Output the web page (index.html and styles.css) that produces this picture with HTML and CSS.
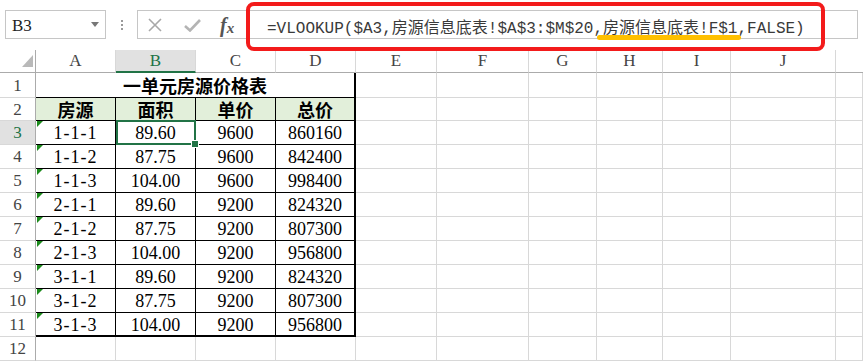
FILE: index.html
```html
<!DOCTYPE html>
<html lang="zh">
<head>
<meta charset="utf-8">
<link rel="stylesheet" href="styles.css">
</head>
<body>
<div class="bar">
  <div class="namebox"><span>B3</span><span class="caret"></span></div>
  <div class="grip"><i></i><i></i><i></i></div>
  <div class="fbar">
    <div class="fbtns">
      <svg class="ic-x" width="14" height="14" viewBox="0 0 14 14"><path d="M1 1L13 13M13 1L1 13" stroke="#a8a8a8" stroke-width="1.6" fill="none"/></svg>
      <svg class="ic-ok" width="17" height="13" viewBox="0 0 17 13"><path d="M1 7L6 11.5L16 1" stroke="#b4b4b4" stroke-width="2.6" fill="none"/></svg>
      <span class="fx"><i>f</i><i class="x">x</i></span>
    </div>
    <div class="ftext">=VLOOKUP($A3,房源信息底表!$A$3:$M$20,<span class="hl">房源信息底表!F$1</span>,FALSE)</div>
  </div>
  <div class="redbox"></div>
</div>

<div class="sheet">
  <div class="ch corner"></div>
  <div class="ch">A</div><div class="ch selh">B</div><div class="ch">C</div><div class="ch">D</div><div class="ch">E</div><div class="ch">F</div><div class="ch">G</div><div class="ch">H</div><div class="ch">I</div><div class="ch">J</div><div class="ch k"></div>

  <div class="rh">1</div><div class="c title">一单元房源价格表</div><div class="c"></div><div class="c"></div><div class="c"></div><div class="c"></div><div class="c"></div><div class="c"></div><div class="c k"></div>

  <div class="rh">2</div><div class="c t hd">房源</div><div class="c t hd">面积</div><div class="c t hd">单价</div><div class="c t hd d">总价</div><div class="c"></div><div class="c"></div><div class="c"></div><div class="c"></div><div class="c"></div><div class="c"></div><div class="c k"></div>

  <div class="rh rsel">3</div><div class="c t tri">1-1-1</div><div class="c t sel">89.60</div><div class="c t">9600</div><div class="c t d">860160</div><div class="c"></div><div class="c"></div><div class="c"></div><div class="c"></div><div class="c"></div><div class="c"></div><div class="c k"></div>

  <div class="rh">4</div><div class="c t tri">1-1-2</div><div class="c t">87.75</div><div class="c t">9600</div><div class="c t d">842400</div><div class="c"></div><div class="c"></div><div class="c"></div><div class="c"></div><div class="c"></div><div class="c"></div><div class="c k"></div>

  <div class="rh">5</div><div class="c t tri">1-1-3</div><div class="c t">104.00</div><div class="c t">9600</div><div class="c t d">998400</div><div class="c"></div><div class="c"></div><div class="c"></div><div class="c"></div><div class="c"></div><div class="c"></div><div class="c k"></div>

  <div class="rh">6</div><div class="c t tri">2-1-1</div><div class="c t">89.60</div><div class="c t">9200</div><div class="c t d">824320</div><div class="c"></div><div class="c"></div><div class="c"></div><div class="c"></div><div class="c"></div><div class="c"></div><div class="c k"></div>

  <div class="rh">7</div><div class="c t tri">2-1-2</div><div class="c t">87.75</div><div class="c t">9200</div><div class="c t d">807300</div><div class="c"></div><div class="c"></div><div class="c"></div><div class="c"></div><div class="c"></div><div class="c"></div><div class="c k"></div>

  <div class="rh">8</div><div class="c t tri">2-1-3</div><div class="c t">104.00</div><div class="c t">9200</div><div class="c t d">956800</div><div class="c"></div><div class="c"></div><div class="c"></div><div class="c"></div><div class="c"></div><div class="c"></div><div class="c k"></div>

  <div class="rh">9</div><div class="c t tri">3-1-1</div><div class="c t">89.60</div><div class="c t">9200</div><div class="c t d">824320</div><div class="c"></div><div class="c"></div><div class="c"></div><div class="c"></div><div class="c"></div><div class="c"></div><div class="c k"></div>

  <div class="rh">10</div><div class="c t tri">3-1-2</div><div class="c t">87.75</div><div class="c t">9200</div><div class="c t d">807300</div><div class="c"></div><div class="c"></div><div class="c"></div><div class="c"></div><div class="c"></div><div class="c"></div><div class="c k"></div>

  <div class="rh">11</div><div class="c t tri last">3-1-3</div><div class="c t last">104.00</div><div class="c t last">9200</div><div class="c t d last">956800</div><div class="c"></div><div class="c"></div><div class="c"></div><div class="c"></div><div class="c"></div><div class="c"></div><div class="c k"></div>

  <div class="rh">12</div><div class="c"></div><div class="c"></div><div class="c"></div><div class="c"></div><div class="c"></div><div class="c"></div><div class="c"></div><div class="c"></div><div class="c"></div><div class="c"></div><div class="c k"></div>
</div>
</body>
</html>
```

FILE: styles.css
```css
* { box-sizing: border-box; }
html, body { margin: 0; padding: 0; }
body {
  width: 863px;
  height: 361px;
  overflow: hidden;
  background: #fff;
  font-family: "Liberation Serif", "Noto Sans CJK SC", serif;
  color: #000;
}

.bar {
  position: relative;
  height: 50px;
  display: flex;
  align-items: flex-start;
}
.namebox {
  margin: 10px 0 0 5px;
  width: 101px;
  height: 29px;
  border: 1px solid #c6c6c6;
  display: flex;
  align-items: center;
  justify-content: space-between;
  padding: 2px 6px 0 6px;
  font-size: 17px;
  color: #222;
}
.caret {
  width: 0;
  height: 0;
  border-top: 5px solid #777;
  border-left: 4px solid transparent;
  border-right: 4px solid transparent;
  margin-top: -2px;
}
.grip {
  margin: 20px 0 0 15px;
  display: flex;
  flex-direction: column;
  gap: 2px;
}
.grip i {
  display: block;
  width: 2px;
  height: 2px;
  background: #9a9a9a;
}
.fbar {
  margin: 10px 5px 0 14px;
  flex: 1;
  height: 29px;
  border: 1px solid #c6c6c6;
  display: flex;
  align-items: center;
}
.fbtns {
  width: 109px;
  height: 100%;
  display: flex;
  align-items: center;
  padding-left: 10px;
}
.ic-ok { margin-left: 22px; margin-top: 1px; }
.fx {
  margin-left: 19px;
  font-family: "Liberation Serif", serif;
  color: #555;
  font-size: 20px;
  font-weight: bold;
  line-height: 1;
}
.fx .x { font-size: 15px; position: relative; top: 1px; }
.ftext {
  padding: 2px 0 0 20px;
  font-family: "Liberation Mono", "Noto Sans CJK SC", monospace;
  font-size: 16px;
  color: #3a3a3a;
  white-space: nowrap;
}
.hl { position: relative; }
.hl::after {
  content: "";
  position: absolute;
  left: -6px;
  right: -4px;
  bottom: -2px;
  height: 5px;
  border-radius: 3px;
  background: #ffc000;
}
.redbox {
  position: absolute;
  left: 246px;
  top: 2px;
  width: 579px;
  height: 49px;
  border: 4px solid #f31b1b;
  border-radius: 8px;
}

.sheet {
  display: grid;
  grid-template-columns: 36px 80px 80px 80px 80px 81px 92px 68px 66px 68px 105px 1fr;
  grid-template-rows: 23px 25px 23px repeat(9, 24px) 24px;
}
.ch {
  border-right: 1px solid #d8d8d8;
  border-bottom: 1px solid #ababab;
  display: flex;
  align-items: center;
  justify-content: center;
  font-size: 17px;
  color: #444;
}
.corner {
  position: relative;
  border-right: 1px solid #ababab;
}
.corner::after {
  content: "";
  position: absolute;
  right: 2px;
  bottom: 5px;
  border-left: 11px solid transparent;
  border-bottom: 12px solid #b9b9b9;
}
.selh {
  background: #e1e1e1;
  border-bottom: 2px solid #217346;
  color: #217346;
}
.k { border-right: none; }

.rh {
  border-right: 1px solid #ababab;
  border-bottom: 1px solid #d8d8d8;
  display: flex;
  align-items: center;
  justify-content: center;
  font-size: 17px;
  color: #444;
  padding-top: 1px;
}
.rsel {
  background: #e1e1e1;
  color: #217346;
}

.c {
  border-right: 1px solid #d8d8d8;
  border-bottom: 1px solid #d8d8d8;
  display: flex;
  align-items: center;
  justify-content: center;
  font-size: 18px;
  padding-top: 2px;
  white-space: nowrap;
}
.t {
  border-right-color: #000;
  border-bottom-color: #000;
}
.d { border-right: 2px solid #000; }
.last { border-bottom: 2px solid #000; }
.title {
  grid-column: span 4;
  font-family: "Noto Sans CJK SC", sans-serif;
  font-weight: bold;
  font-size: 18px;
  padding-top: 0;
  border-bottom-color: #000;
  border-right: 2px solid #000;
}
.hd {
  background: #e2efda;
  font-family: "Noto Sans CJK SC", sans-serif;
  font-weight: bold;
  padding-top: 0;
}
.tri {
  position: relative;
  letter-spacing: 1px;
}
.tri::before {
  content: "";
  position: absolute;
  left: 1px;
  top: 0;
  border-top: 6px solid #1b8a1b;
  border-right: 6px solid transparent;
}
.sel { position: relative; }
.sel::after {
  content: "";
  position: absolute;
  left: 0;
  top: -1px;
  right: -1px;
  bottom: -1px;
  border: 2px solid #217346;
  z-index: 2;
}
.sel::before {
  content: "";
  position: absolute;
  right: -4px;
  bottom: -4px;
  width: 6px;
  height: 6px;
  background: #217346;
  border: 1px solid #fff;
  z-index: 3;
}
```
